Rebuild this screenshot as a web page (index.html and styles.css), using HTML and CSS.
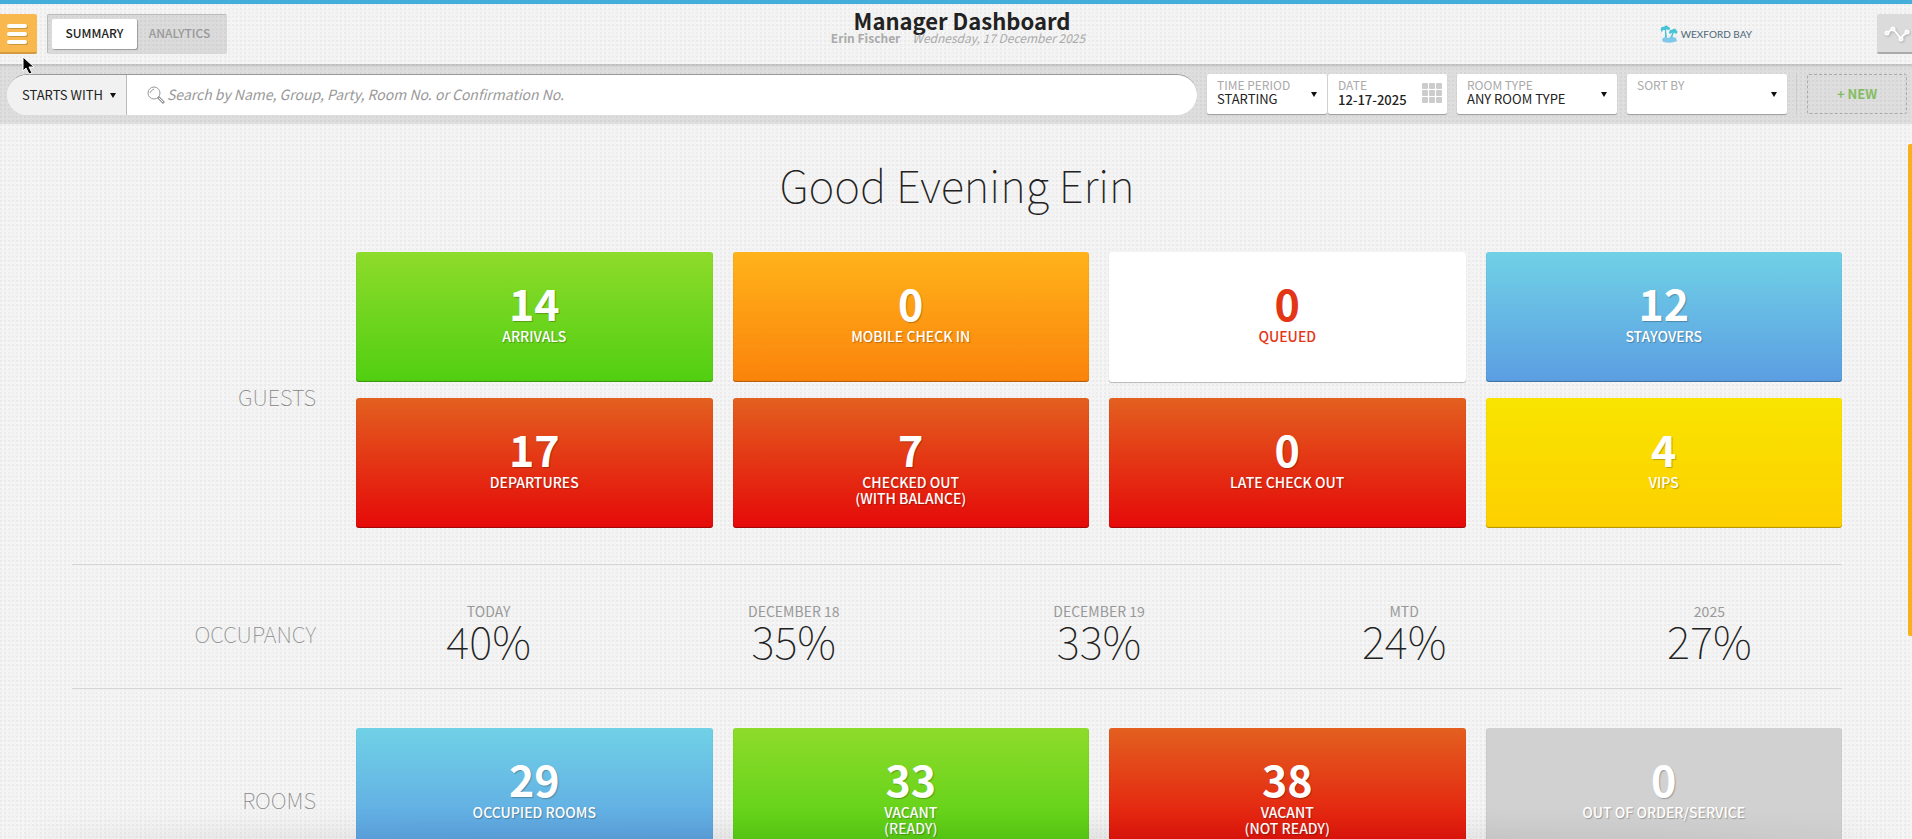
FILE: index.html
```html
<!DOCTYPE html>
<html lang="en">
<head>
	<meta charset="utf-8">
	<title>Manager Dashboard</title>
	<meta name="viewport" content="width=device-width, initial-scale=1">
	<link rel="stylesheet" href="styles.css">
</head>
<body>

	<header class="topbar">
		<div class="topbar-left">
			<button class="menu-btn" aria-label="Menu">
				<svg width="22" height="26" viewBox="0 0 22 26"><g class="menu-shade"><rect x="1" y="2" width="20" height="4" rx="2"/><rect x="1" y="10" width="20" height="4" rx="2"/><rect x="1" y="18" width="20" height="4" rx="2"/></g><g fill="#fff"><rect x="0" y="1" width="20" height="4" rx="2"/><rect x="0" y="9" width="20" height="4" rx="2"/><rect x="0" y="17" width="20" height="4" rx="2"/></g></svg>
			</button>
			<nav class="tabs">
				<button class="tab active">SUMMARY</button>
				<button class="tab">ANALYTICS</button>
			</nav>
		</div>
		<div class="topbar-title">
			<h1>Manager Dashboard</h1>
			<p><b>Erin Fischer</b><i>Wednesday, 17 December 2025</i></p>
		</div>
		<div class="topbar-right">
			<a class="brand" href="#">
				<svg width="18" height="18" viewBox="0 0 18 18">
					<path fill="#45c4d6" d="M1 6C0 3 2 1 4 2C5 0 8 0 8 2C10 2 11 4 9 5L6 4.500L7 13H5L5 5L3 5L2 7Z"/>
					<path fill="#45c4d6" d="M9 8C9 5 11 4 12 5C14 3 16 4 16 5C18 6 18 8 16 9L14 7.500L12 13H10L12.500 7.500L10 9Z"/>
					<path fill="#7fc8ea" d="M2 14Q4 11 8 13Q12 11 16 13L17 16Q12 19 3 17Z"/>
				</svg>
				<span>WEXFORD BAY</span>
			</a>
			<button class="chart-btn" aria-label="Activity">
				<svg width="28" height="18" viewBox="0 0 28 18" fill="none" stroke="#fff" stroke-width="2"><path d="M5.500 8L8.500 5.500M11 6L17 13.500M18.500 13L23 9"/><circle cx="4" cy="9" r="1.500"/><circle cx="10" cy="5" r="1.500"/><circle cx="18" cy="15" r="1.500"/><circle cx="24" cy="8" r="1.500"/></svg>
			</button>
		</div>
	</header>

	<form class="filters">
		<div class="search">
			<select class="search-mode" aria-label="Match">
				<option>STARTS WITH</option>
			</select>
			<label class="search-box">
				<svg width="18" height="18" viewBox="0 0 18 18" fill="none" stroke="#999"><circle cx="7" cy="7" r="6"/><path d="M3 7Q4 4 7 3"/><path stroke-width="3" d="M11 11L17 17"/><path stroke="#fff" d="M12 12L16 16"/></svg>
				<input type="text" aria-label="Search" placeholder="Search by Name, Group, Party, Room No. or Confirmation No.">
			</label>
		</div>
		<div class="pair">
			<div class="field">
				<label for="period">TIME PERIOD</label>
				<select id="period"><option>STARTING</option></select>
			</div>
			<div class="field date">
				<label for="date">DATE</label>
				<input id="date" type="text" value="12-17-2025">
				<svg class="grid-icon" width="20" height="20" viewBox="0 0 20 20" fill="#ccc"><rect width="6" height="6" rx="1"/><rect x="7" width="6" height="6" rx="1"/><rect x="14" width="6" height="6" rx="1"/><rect y="7" width="6" height="6" rx="1"/><rect x="7" y="7" width="6" height="6" rx="1"/><rect x="14" y="7" width="6" height="6" rx="1"/><rect y="14" width="6" height="6" rx="1"/><rect x="7" y="14" width="6" height="6" rx="1"/><rect x="14" y="14" width="6" height="6" rx="1"/></svg>
			</div>
		</div>
		<div class="field wide">
			<label for="room">ROOM TYPE</label>
			<select id="room"><option>ANY ROOM TYPE</option></select>
		</div>
		<div class="field wide">
			<label for="sort">SORT BY</label>
			<select id="sort"><option></option></select>
		</div>
		<div class="new-wrap">
			<button class="new-btn" type="button">+ NEW</button>
		</div>
	</form>

	<main class="dashboard">
		<h2>Good Evening Erin</h2>

		<section class="row">
			<h3>GUESTS</h3>
			<div class="cards">
				<a href="#" class="card green"><strong>14</strong><span>ARRIVALS</span></a>
				<a href="#" class="card orange"><strong>0</strong><span>MOBILE CHECK IN</span></a>
				<a href="#" class="card white"><strong>0</strong><span>QUEUED</span></a>
				<a href="#" class="card blue"><strong>12</strong><span>STAYOVERS</span></a>
				<a href="#" class="card red"><strong>17</strong><span>DEPARTURES</span></a>
				<a href="#" class="card red"><strong>7</strong><span>CHECKED OUT<br>(WITH BALANCE)</span></a>
				<a href="#" class="card red"><strong>0</strong><span>LATE CHECK OUT</span></a>
				<a href="#" class="card yellow"><strong>4</strong><span>VIPS</span></a>
			</div>
		</section>

		<section class="row occupancy">
			<h3>OCCUPANCY</h3>
			<dl class="stats">
				<div><dt>TODAY</dt><dd>40%</dd></div>
				<div><dt>DECEMBER 18</dt><dd>35%</dd></div>
				<div><dt>DECEMBER 19</dt><dd>33%</dd></div>
				<div><dt>MTD</dt><dd>24%</dd></div>
				<div><dt>2025</dt><dd>27%</dd></div>
			</dl>
		</section>

		<section class="row">
			<h3>ROOMS</h3>
			<div class="cards">
				<a href="#" class="card blue"><strong>29</strong><span>OCCUPIED ROOMS</span></a>
				<a href="#" class="card green"><strong>33</strong><span>VACANT<br>(READY)</span></a>
				<a href="#" class="card red"><strong>38</strong><span>VACANT<br>(NOT READY)</span></a>
				<a href="#" class="card gray"><strong>0</strong><span>OUT OF ORDER/SERVICE</span></a>
			</div>
		</section>
	</main>

	<div class="scroll-thumb"></div>
	<div class="bottom-shade"></div>
	<svg class="cursor" width="14" height="20" viewBox="0 0 14 20"><path d="M1 1V15L4 12L7 18L10 17L7 11H12Z" fill="#000" stroke="#fff"/></svg>

</body>
</html>
```
FILE: styles.css
```css
* {
	box-sizing: border-box;
}
html {
	height: 100%;
}
body {
	height: 100%;
	margin: 0;
	overflow: hidden;
	display: flex;
	flex-direction: column;
	color: #222;
	background-color: #f3f3f3;
	background-image:
		radial-gradient(circle at 1px 1px, rgba(0,0,0,0.03) 1px, transparent 1px),
		radial-gradient(circle at 3px 3px, rgba(255,255,255,0.4) 1px, transparent 1px);
	background-size: 4px 4px, 5px 5px;
	font-family: "Noto Sans CJK SC", "Open Sans", sans-serif;
	font-size: 14px;
}
button, input, select {
	font: inherit;
	color: inherit;
	margin: 0;
	padding: 0;
	border: 0;
	background: none;
	outline: 0;
}
h1, h2, h3, p, dl, dd {
	margin: 0;
}
a {
	color: inherit;
	text-decoration: none;
}

/* top bar */
.topbar {
	flex: none;
	height: 64px;
	border-top: 4px solid #44aedb;
	display: grid;
	grid-template-columns: 1fr auto 1fr;
}
.topbar-left {
	display: flex;
	gap: 10px;
	padding-top: 10px;
}
.menu-btn {
	width: 37px;
	height: 40px;
	background: #f9b84e;
	border-bottom: 2px solid #d49a40;
	border-radius: 0 2px 2px 0;
	padding: 6px 0 0 7px;
	text-align: left;
}
.menu-btn svg {
	display: block;
}
.menu-shade {
	fill: #cc9640;
}
.tabs {
	display: flex;
	height: 40px;
	padding: 4px;
	background: rgba(0,0,0,0.1);
	border: 1px solid #d8d8d8;
	border-top-color: #bbb;
	border-left-color: #bbb;
	border-radius: 2px;
}
.tab {
	width: 85px;
	height: 30px;
	padding-bottom: 3px;
	font-size: 12px;
	font-weight: 500;
	color: #999;
}
.tab.active {
	background: #fff;
	color: #222;
	border-radius: 2px;
	box-shadow: 1px 1px 1px rgba(0,0,0,0.3);
}
.topbar-title {
	text-align: center;
	padding: 5px 0 0 12px;
}
.topbar-title h1 {
	font-size: 22px;
	line-height: 22px;
}
.topbar-title p {
	color: #aaa;
	font-size: 12px;
	line-height: 14px;
	padding-right: 8px;
}
.topbar-title i {
	margin-left: 12px;
}
.topbar-right {
	display: flex;
	justify-content: flex-end;
	gap: 125px;
	padding-top: 10px;
}
.brand {
	display: flex;
	align-items: center;
	gap: 3px;
	height: 40px;
	font: 10px Lato, sans-serif;
	color: #4d6878;
	padding-bottom: 1px;
}
.chart-btn {
	width: 35px;
	height: 40px;
	overflow: hidden;
	background: #dbdbdb;
	border-bottom: 2px solid #aaa;
	border-radius: 2px 0 0 2px;
	padding: 0 0 0 6px;
	text-align: left;
}
.chart-btn svg {
	display: block;
	filter: drop-shadow(1px 1px 1px rgba(0,0,0,0.2));
}

/* search and filters */
.filters {
	flex: none;
	display: flex;
	gap: 10px;
	height: 60px;
	padding: 10px 5px 9px 7px;
	background: linear-gradient(rgba(0,0,0,0.12), transparent 4px), rgba(0,0,0,0.09);
}
.search {
	flex: 1;
	display: flex;
	height: 41px;
	border-top: 1px solid #999;
	border-radius: 21px;
	background: #fff;
	overflow: hidden;
}
select {
	appearance: none;
	background: url("data:image/svg+xml,%3Csvg xmlns='http://www.w3.org/2000/svg' width='6' height='5'%3E%3Cpath d='M0 0H6L3 5Z' fill='%23111'/%3E%3C/svg%3E") no-repeat;
}
.search-mode {
	width: 120px;
	padding: 0 0 2px 15px;
	font-size: 13px;
	background-color: #f1f1f1;
	background-position: 103px 18px;
	border-right: 1px solid #bbb;
}
.search-box {
	flex: 1;
	display: flex;
	align-items: center;
	gap: 2px;
	padding-left: 20px;
}
.search-box input {
	flex: 1;
	padding-bottom: 2px;
	font-size: 14px;
	font-style: italic;
}
.search-box input::placeholder {
	color: #999;
}
.pair {
	display: grid;
	grid-template-columns: 120px 119px;
	gap: 1px;
}
.field {
	height: 40px;
	display: grid;
	grid-template-rows: 14px 14px;
	padding-top: 4px;
	background: #fff;
	border-radius: 2px;
	box-shadow: 0 1px 1px rgba(0,0,0,0.3);
	font-size: 12px;
	line-height: 14px;
}
.field label {
	padding-left: 10px;
	color: #aaa;
}
.field select, .field input {
	min-width: 0;
	padding-left: 10px;
	background-position: right 10px top 0;
	font-size: 13px;
	line-height: 14px;
}
.field.wide {
	width: 160px;
}
.field.date {
	grid-template-columns: 94px 20px;
	grid-template-rows: 14px 16px;
}
.date input {
	grid-row: 2;
	font-weight: 500;
}
.date .grid-icon {
	grid-row: 1 / 3;
	grid-column: 2;
	align-self: center;
}
.new-wrap {
	margin-left: -1px;
	border-left: 1px solid #ccc;
	padding-left: 10px;
}
.new-btn {
	width: 100px;
	height: 40px;
	padding-bottom: 2px;
	border: 1px dashed #aaa;
	border-radius: 2px;
	color: #84bd64;
	font-size: 13px;
	font-weight: 700;
}

/* dashboard */
.dashboard {
	flex: 1;
	min-height: 0;
	overflow: hidden;
	padding: 31px 70px 0 72px;
}
.dashboard h2 {
	font-size: 44px;
	font-weight: 100;
	line-height: 58px;
	text-align: center;
	margin-bottom: 39px;
}
.row {
	display: grid;
	grid-template-columns: 244px 1fr;
	gap: 40px;
	align-items: center;
}
.row h3 {
	text-align: right;
	font-size: 22px;
	font-weight: 100;
	line-height: 30px;
	padding-bottom: 4px;
	color: #888;
}
.cards {
	display: grid;
	grid-template-columns: repeat(4, 1fr);
	gap: 16px 20px;
	padding-bottom: 16px;
}
.card {
	height: 130px;
	padding-top: 26px;
	border-radius: 3px;
	color: #fff;
	text-align: center;
	text-shadow: 1px 1px 1px rgba(0,0,0,0.25);
	box-shadow: inset 0 -1px 1px rgba(0,0,0,0.3);
}
.card strong {
	display: block;
	font-size: 43px;
	line-height: 48px;
	margin-bottom: 2px;
}
.card span {
	display: block;
	font-size: 14px;
	font-weight: 500;
	line-height: 16px;
}
.green {
	background: linear-gradient(#8edb2b, #51cf11);
}
.orange {
	background: linear-gradient(#ffb31a, #fb830b);
}
.blue {
	background: linear-gradient(#70d1e6, #5b9ee2);
}
.red {
	background: linear-gradient(#e3601f, #e50909);
}
.yellow {
	background: linear-gradient(#f9e400, #fdd000);
}
.gray {
	background: #d1d1d1;
}
.white {
	background: #fff;
	color: #e33616;
	text-shadow: none;
	box-shadow: 0 1px 1px rgba(0,0,0,0.25);
}
.occupancy {
	margin: 20px 0 39px;
	height: 125px;
	padding-top: 17px;
	border-top: 1px solid #d5d5d5;
	border-bottom: 1px solid #d5d5d5;
	gap: 20px;
}
.stats {
	display: grid;
	grid-template-columns: repeat(5, 1fr);
	text-align: center;
	margin-right: -20px;
	padding-bottom: 7px;
}
.stats dt {
	font-size: 14px;
	line-height: 16px;
	color: #999;
}
.stats dd {
	font-size: 44px;
	font-weight: 100;
	line-height: 42px;
}

/* things that float over the page */
.scroll-thumb {
	position: absolute;
	right: 0;
	top: 144px;
	width: 4px;
	height: 492px;
	background: #fbaf1d;
	border-radius: 2px 0 0 2px;
}
.bottom-shade {
	position: absolute;
	left: 30px;
	right: 30px;
	bottom: -10px;
	height: 10px;
	border-radius: 50%;
	box-shadow: 0 0 30px rgba(0,0,0,0.25);
}
.cursor {
	position: absolute;
	left: 22px;
	top: 56px;
}
```
